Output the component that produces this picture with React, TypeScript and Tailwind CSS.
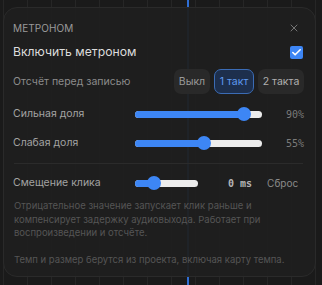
import { Check, X } from "lucide-react";

const SANS = "font-['Inter','Noto_Sans',sans-serif]";

function Slider({ value, width }: { value: number; width: number }) {
  // thumb travels inside the track, like a native range input
  const thumb = 14;
  const left = thumb / 2 + (value / 100) * (width - thumb);
  return (
    <div className="relative h-[14px] flex items-center shrink-0" style={{ width }}>
      <div className="h-[7px] w-full rounded-full bg-[#ececec] overflow-hidden">
        <div className="h-full bg-[#3d86f5]" style={{ width: left }} />
      </div>
      <div
        className="absolute top-0 h-[14px] w-[14px] rounded-full bg-[#3d86f5] -translate-x-1/2"
        style={{ left }}
      />
    </div>
  );
}

export default function App() {
  return (
    <div
      className={`relative w-[322px] h-[285px] overflow-hidden bg-[#1a1a1a] bg-[linear-gradient(to_right,#262626_1px,transparent_1px)] bg-[length:24px_100%] bg-[position:3px_0] pl-[3px] pt-[7px] ${SANS}`}
    >
      {/* playhead */}
      <div className="absolute left-[187px] top-0 h-full w-[2px] bg-[#2f6fd6]" />

      <div className="relative w-[313px] h-[270px] rounded-[14px] border border-[#2a2a2a] bg-[#1f1f1f]/95 pl-[9px] pr-[11px] pt-[12px]">
        {/* header */}
        <div className="flex items-center justify-between h-[16px]">
          <span className="text-[10px] text-[#9a9a9a] tracking-[0.1px]">МЕТРОНОМ</span>
          <X className="w-[12px] h-[12px] text-[#8a8a8a] mr-[4px]" strokeWidth={1.6} />
        </div>

        <div className="flex items-center justify-between h-[20px] mt-[6px]">
          <span className="text-[12.2px] text-[#dcdcdc]">Включить метроном</span>
          <div className="w-[13px] h-[13px] rounded-[2px] bg-[#3d86f5] flex items-center justify-center mr-[1px]">
            <Check className="w-[11px] h-[11px] text-white" strokeWidth={3.5} />
          </div>
        </div>

        <div className="flex items-center justify-between h-[25px] mt-[7px]">
          <span className="text-[10.5px] text-[#8c8c8c]">Отсчёт перед записью</span>
          <div className="flex gap-[4px] text-[10.5px]">
            <div className="h-[25px] w-[36px] rounded-[7px] bg-[#292929] text-[#9a9a9a] flex items-center justify-center">Выкл</div>
            <div className="h-[25px] w-[40px] rounded-[7px] bg-[#1d2f4d] border border-[#3b6cb5] text-[#5f9af0] flex items-center justify-center">1 такт</div>
            <div className="h-[25px] w-[46px] rounded-[7px] bg-[#292929] text-[#b0b0b0] flex items-center justify-center">2 такта</div>
          </div>
        </div>

        <div className="flex items-center h-[20px] mt-[10px]">
          <span className="w-[122px] text-[10.5px] text-[#a3a3a3]">Сильная доля</span>
          <Slider value={90} width={127} />
          <span className="ml-auto text-[10px] text-[#7a7a7a] font-['DejaVu_Sans_Mono',monospace]">90%</span>
        </div>

        <div className="flex items-center h-[20px] mt-[9px]">
          <span className="w-[122px] text-[10.5px] text-[#a3a3a3]">Слабая доля</span>
          <Slider value={55} width={127} />
          <span className="ml-auto text-[10px] text-[#7a7a7a] font-['DejaVu_Sans_Mono',monospace]">55%</span>
        </div>

        <div className="h-px bg-[#2b2b2b] mt-[10px] ml-[1px] mr-[1px]" />

        <div className="flex items-center h-[20px] mt-[9px]">
          <span className="w-[122px] text-[10.5px] text-[#a3a3a3]">Смещение клика</span>
          <Slider value={25} width={63} />
          <span className="ml-[30px] whitespace-nowrap text-[10px] font-bold text-[#b5b5b5] font-['DejaVu_Sans_Mono',monospace]">0 ms</span>
          <span className="ml-[15px] text-[10px] text-[#8a8a8a]">Сброс</span>
        </div>

        <p className="mt-[6px] pl-[1px] text-[9.5px] leading-[13.5px] text-[#555555]">
          Отрицательное значение запускает клик раньше и<br />
          компенсирует задержку аудиовыхода. Работает при<br />
          воспроизведении и отсчёте.
        </p>

        <p className="mt-[13px] pl-[1px] text-[9.5px] leading-[13.5px] text-[#555555] whitespace-nowrap">
          Темп и размер берутся из проекта, включая карту темпа.
        </p>
      </div>
    </div>
  );
}
